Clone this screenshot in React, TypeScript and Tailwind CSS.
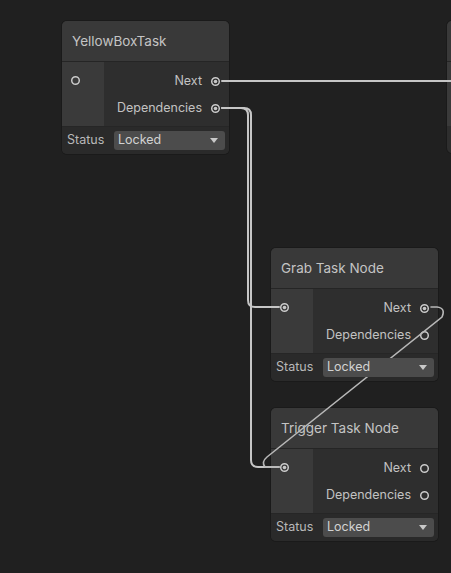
import React from 'react';

type NodeProps = {
  title: string;
  x: number;
  y: number;
  inputLinked?: boolean;
  nextLinked?: boolean;
  depsLinked?: boolean;
};

const Port: React.FC<{ linked?: boolean }> = ({ linked }) => (
  <svg className="w-[11px] h-[11px] shrink-0" viewBox="0 0 11 11">
    <circle cx="5.5" cy="5.5" r="3.8" fill="none" stroke="#c8c8c8" strokeWidth={1.5} />
    {linked && <circle cx="5.5" cy="5.5" r="1.8" fill="#c8c8c8" />}
  </svg>
);

const TaskNode: React.FC<NodeProps> = ({ title, x, y, inputLinked, nextLinked, depsLinked }) => (
  <div
    className="absolute w-[167px] rounded-[5px] overflow-hidden bg-[#2e2e2e] shadow-[0_0_0_1px_#1a1a1a]"
    style={{ left: x, top: y }}
  >
    {/* Title */}
    <div className="h-[41px] flex items-center pl-[10px] bg-[#393939] border-b border-[#252525] text-[13.5px] text-[#c4c4c4]">
      {title}
    </div>

    {/* Ports */}
    <div className="flex h-[64px]">
      <div className="w-[42px] bg-[#3a3a3a] pt-[13px] pl-[8px]">
        <Port linked={inputLinked} />
      </div>
      <div className="flex-1 flex flex-col items-end pt-[9px] pr-[8px] gap-[7px] text-[12.5px] text-[#c2c2c2]">
        <div className="h-[20px] flex items-center gap-[8px]">
          <span>Next</span>
          <Port linked={nextLinked} />
        </div>
        <div className="h-[20px] flex items-center gap-[8px]">
          <span>Dependencies</span>
          <Port linked={depsLinked} />
        </div>
      </div>
    </div>

    {/* Status */}
    <div className="h-[28px] flex items-center bg-[#2a2a2a] pl-[5px] pr-[4px] border-t border-[#262626]">
      <span className="w-[47px] text-[12.5px] text-[#b9b9b9]">Status</span>
      <div className="relative z-20 flex-1 h-[19px] rounded-[3px] bg-[#4c4c4c] flex items-center justify-between pl-[4px] pr-[7px] text-[12.5px] text-[#d2d2d2]">
        <span>Locked</span>
        <svg className="w-[8px] h-[5px]" viewBox="0 0 8 5">
          <path d="M0 0 H8 L4 5 Z" fill="#c8c8c8" />
        </svg>
      </div>
    </div>
  </div>
);

export default function App() {
  return (
    <div
      className="relative w-[451px] h-[573px] overflow-hidden bg-[#202020]"
      style={{ fontFamily: 'Inter, "Noto Sans", sans-serif' }}
    >
      <TaskNode title="YellowBoxTask" x={62} y={21} nextLinked depsLinked />
      <TaskNode title="Grab Task Node" x={271} y={248} inputLinked nextLinked />
      <TaskNode title="Trigger Task Node" x={271} y={408} inputLinked />

      {/* next node, cut off at the edge */}
      <div className="absolute left-[447px] top-[21px] w-[167px] h-[132px] rounded-[5px] overflow-hidden bg-[#2e2e2e] shadow-[0_0_0_1px_#1a1a1a]">
        <div className="h-[41px] bg-[#393939] border-b border-[#252525]" />
        <div className="h-[64px] w-[42px] bg-[#3a3a3a]" />
      </div>

      {/* edges */}
      <svg className="absolute inset-0 z-10 pointer-events-none" width={451} height={573}>
        <g fill="none" stroke="#c6c6c6" strokeWidth={2} strokeLinecap="round">
          <path d="M222 81 H451" />
          <path d="M222 108 H241 Q248 108 248 115 V300 Q248 307 255 307 H279" />
          <path d="M222 108 H244 Q251 108 251 115 V460 Q251 467 258 467 H279" />
        </g>
        <path
          d="M431 307 H437 Q446 308 442 317 L267 457 Q261 462 265 467 H279"
          fill="none"
          stroke="#b8b8b8"
          strokeWidth={1.6}
          strokeLinecap="round"
        />
      </svg>
    </div>
  );
}
